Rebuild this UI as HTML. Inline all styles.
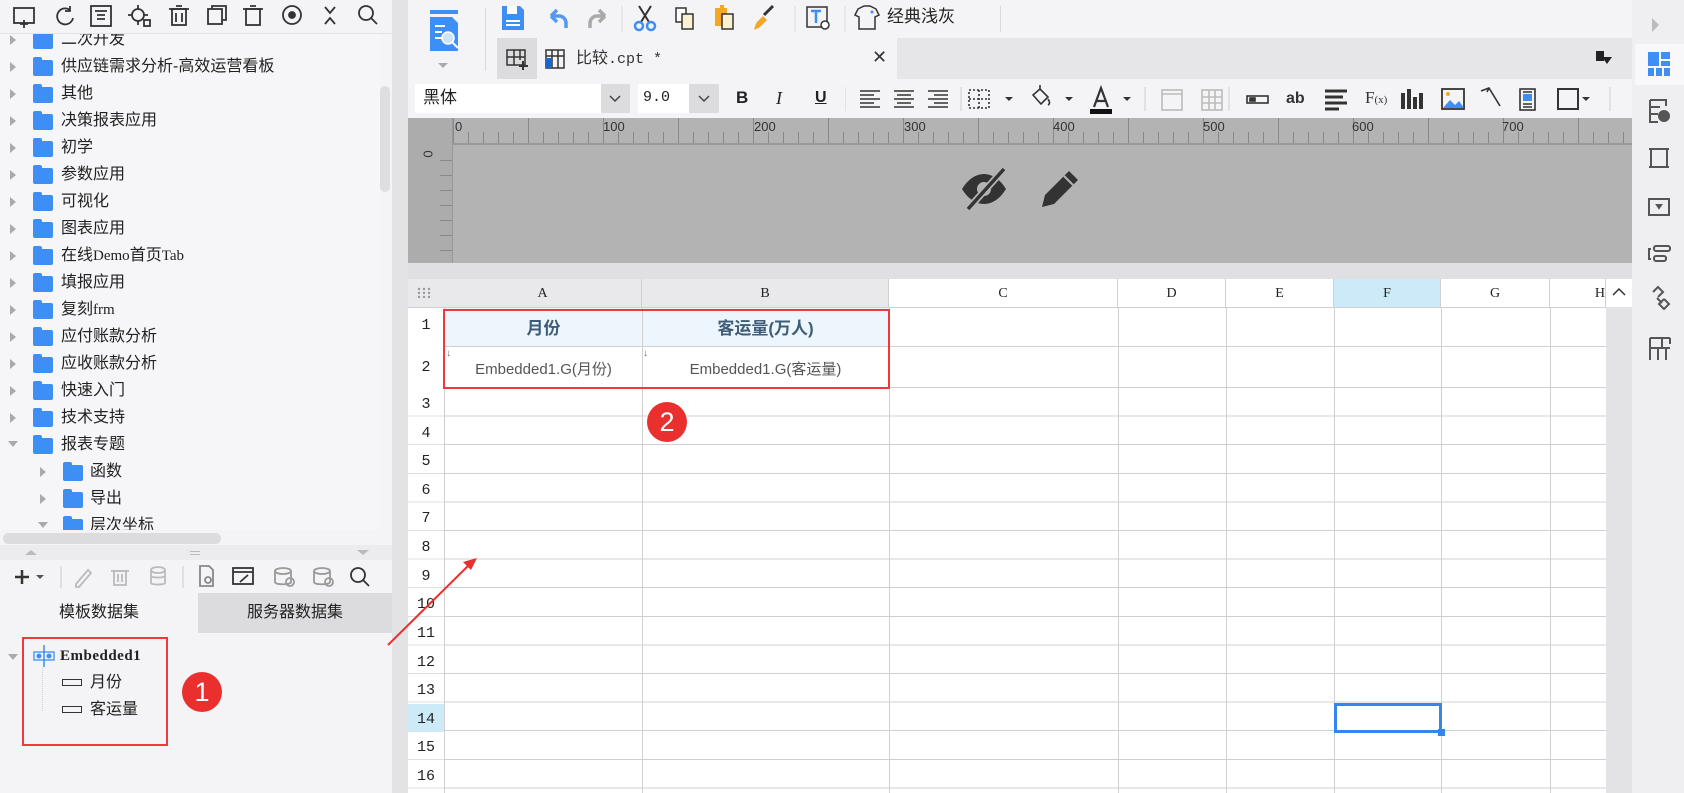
<!DOCTYPE html>
<html><head><meta charset="utf-8">
<style>
*{margin:0;padding:0;box-sizing:border-box}
body{width:1684px;height:793px;overflow:hidden;background:#f4f4f6;font-family:"Liberation Sans","Noto Sans CJK SC",sans-serif;position:relative;color:#222}
.a{position:absolute}
.ti{position:absolute;font-size:16px;line-height:20px;white-space:nowrap;color:#222}
.fold{position:absolute;width:20px;height:16px;background:#3d8ef5;border-radius:2px}
.fold:before{content:"";position:absolute;left:0;top:-3px;width:9px;height:4px;background:#3d8ef5;border-radius:2px 2px 0 0}
.tri{position:absolute;width:0;height:0;border-top:5px solid transparent;border-bottom:5px solid transparent;border-left:6px solid #aaa}
.trid{position:absolute;width:0;height:0;border-left:5px solid transparent;border-right:5px solid transparent;border-top:6px solid #aaa}
.rh{position:absolute;left:408px;width:36px;text-align:center;font-family:"Liberation Mono",monospace;font-size:15px;color:#222}
.ch{position:absolute;top:279px;height:29px;line-height:29px;text-align:center;font-family:"Liberation Serif",serif;font-size:14px;border-right:1px solid #d0d0d0}
.vl{position:absolute;top:308px;bottom:0;width:1px;background:#d0d0d0}
.ic{position:absolute}
.sep{position:absolute;width:1px;background:#d8d8d8}
</style></head><body>

<!-- LEFT PANEL -->
<div class="a" style="left:0;top:0;width:392px;height:34px;background:#f4f4f6;border-bottom:1px solid #e2e2e2"></div>
<svg class="a" style="left:0;top:0" width="392" height="34" fill="none" stroke="#333" stroke-width="1.8">
<rect x="14" y="8" width="20" height="15"/><path d="M24 20v8M20 24h8"/>
<path d="M70 10a8 8 0 1 0 3 8M70 6v5h-5"/>
<rect x="91" y="6" width="20" height="20"/><path d="M95 11h12M97 15h8M97 19h8"/>
<circle cx="138" cy="15" r="6"/><path d="M138 5v4M138 21v4M128 15h4M144 15h4"/><rect x="144" y="20" width="6" height="6"/>
<rect x="172" y="9" width="14" height="16"/><path d="M169 9h20M176 6h6M176 13v9M182 13v9"/>
<rect x="208" y="9" width="14" height="15"/><path d="M212 9V6h14v14h-4"/>
<rect x="246" y="9" width="14" height="16"/><path d="M243 9h20M250 6h6"/>
<circle cx="292" cy="15" r="9"/><circle cx="292" cy="15" r="3" fill="#333"/>
<path d="M325 7l5 6 5-6M325 24l5-6 5 6"/>
<circle cx="366" cy="13" r="7"/><path d="M371 18l6 6"/>
</svg>
<div class="a" style="left:0;top:34px;width:380px;height:496px;background:#f6f6f8;overflow:hidden">
<div class="tri" style="left:10px;top:1px"></div><div class="fold" style="left:33px;top:-1px"></div><div class="ti" style="left:61px;top:-4px">二次开发</div>
</div>
<div class="a" style="left:0;top:34px;width:380px;height:496px;overflow:hidden" id="tree">
<div class="tri" style="left:10px;top:28px"></div><div class="fold" style="left:33px;top:26px"></div><div class="ti" style="left:61px;top:23px">供应链需求分析-高效运营看板</div>
<div class="tri" style="left:10px;top:55px"></div><div class="fold" style="left:33px;top:53px"></div><div class="ti" style="left:61px;top:50px">其他</div>
<div class="tri" style="left:10px;top:82px"></div><div class="fold" style="left:33px;top:80px"></div><div class="ti" style="left:61px;top:77px">决策报表应用</div>
<div class="tri" style="left:10px;top:109px"></div><div class="fold" style="left:33px;top:107px"></div><div class="ti" style="left:61px;top:104px">初学</div>
<div class="tri" style="left:10px;top:136px"></div><div class="fold" style="left:33px;top:134px"></div><div class="ti" style="left:61px;top:131px">参数应用</div>
<div class="tri" style="left:10px;top:163px"></div><div class="fold" style="left:33px;top:161px"></div><div class="ti" style="left:61px;top:158px">可视化</div>
<div class="tri" style="left:10px;top:190px"></div><div class="fold" style="left:33px;top:188px"></div><div class="ti" style="left:61px;top:185px">图表应用</div>
<div class="tri" style="left:10px;top:217px"></div><div class="fold" style="left:33px;top:215px"></div><div class="ti" style="left:61px;top:212px">在线<span style="font-family:'Liberation Serif';font-size:15px">Demo</span>首页<span style="font-family:'Liberation Serif';font-size:15px">Tab</span></div>
<div class="tri" style="left:10px;top:244px"></div><div class="fold" style="left:33px;top:242px"></div><div class="ti" style="left:61px;top:239px">填报应用</div>
<div class="tri" style="left:10px;top:271px"></div><div class="fold" style="left:33px;top:269px"></div><div class="ti" style="left:61px;top:266px">复刻<span style="font-family:'Liberation Serif';font-size:15px">frm</span></div>
<div class="tri" style="left:10px;top:298px"></div><div class="fold" style="left:33px;top:296px"></div><div class="ti" style="left:61px;top:293px">应付账款分析</div>
<div class="tri" style="left:10px;top:325px"></div><div class="fold" style="left:33px;top:323px"></div><div class="ti" style="left:61px;top:320px">应收账款分析</div>
<div class="tri" style="left:10px;top:352px"></div><div class="fold" style="left:33px;top:350px"></div><div class="ti" style="left:61px;top:347px">快速入门</div>
<div class="tri" style="left:10px;top:379px"></div><div class="fold" style="left:33px;top:377px"></div><div class="ti" style="left:61px;top:374px">技术支持</div>
<div class="trid" style="left:8px;top:407px"></div><div class="fold" style="left:33px;top:404px"></div><div class="ti" style="left:61px;top:401px">报表专题</div>
<div class="tri" style="left:40px;top:433px"></div><div class="fold" style="left:63px;top:431px"></div><div class="ti" style="left:90px;top:428px">函数</div>
<div class="tri" style="left:40px;top:460px"></div><div class="fold" style="left:63px;top:458px"></div><div class="ti" style="left:90px;top:455px">导出</div>
<div class="trid" style="left:38px;top:488px"></div><div class="fold" style="left:63px;top:485px"></div><div class="ti" style="left:90px;top:482px">层次坐标</div>
</div>
<div class="a" style="left:380px;top:34px;width:12px;height:496px;background:#f4f4f6"></div>
<div class="a" style="left:380px;top:86px;width:10px;height:106px;background:#dedee0;border-radius:5px"></div>
<div class="a" style="left:0;top:530px;width:392px;height:15px;background:#f4f4f6"></div>
<div class="a" style="left:3px;top:533px;width:218px;height:11px;background:#dcdcde;border-radius:6px"></div>
<div class="a" style="left:0;top:545px;width:392px;height:15px;background:#ececee"></div>
<div class="a" style="left:25px;top:550px;border-left:6px solid transparent;border-right:6px solid transparent;border-bottom:5px solid #bbb"></div>
<div class="a" style="left:357px;top:550px;border-left:6px solid transparent;border-right:6px solid transparent;border-top:5px solid #bbb"></div>
<div class="a" style="left:190px;top:551px;width:10px;height:4px;border-top:1px solid #bbb;border-bottom:1px solid #bbb"></div>
<svg class="a" style="left:0;top:560px" width="392" height="33" fill="none" stroke="#333" stroke-width="1.8">
<path d="M15 17h14M22 10v14" stroke-width="2.5"/><path d="M36 15l4 4 4-4z" fill="#555" stroke="none"/>
<path d="M61 6v22" stroke="#ddd"/>
<path d="M76 24l12-14 3 3-12 14h-3z" stroke="#bbb"/>
<g stroke="#bbb"><rect x="114" y="11" width="12" height="14"/><path d="M111 11h18M118 14v8M122 14v8"/>
<ellipse cx="158" cy="10" rx="7" ry="3"/><path d="M151 10v13c0 2 14 2 14 0V10M151 16c0 2 14 2 14 0"/></g>
<path d="M183 6v22" stroke="#ddd"/>
<path d="M200 6h9l4 4v16h-13z" stroke="#888"/><circle cx="208" cy="20" r="3" stroke="#888"/>
<rect x="233" y="8" width="20" height="16"/><path d="M233 12h20M240 22l8-7"/>
<g stroke="#999"><ellipse cx="283" cy="11" rx="8" ry="3"/><path d="M275 11v11c0 3 16 3 16 0V11"/><circle cx="290" cy="22" r="4"/>
<ellipse cx="322" cy="11" rx="8" ry="3"/><path d="M314 11v11c0 3 16 3 16 0V11"/><circle cx="329" cy="22" r="4"/></g>
<circle cx="358" cy="15" r="7"/><path d="M363 20l6 6"/>
</svg>
<div class="a" style="left:0;top:593px;width:198px;height:40px;background:#f4f4f6;font-size:16px;line-height:40px;text-align:center">模板数据集</div>
<div class="a" style="left:198px;top:593px;width:194px;height:40px;background:#dcdcdf;font-size:16px;line-height:40px;text-align:center">服务器数据集</div>
<div class="a" style="left:0;top:633px;width:392px;height:160px;background:#f4f4f6"></div>
<div class="trid" style="left:8px;top:654px"></div>
<svg class="a" style="left:33px;top:645px" width="22" height="22"><path d="M11 0v22" stroke="#3d8ef5" stroke-width="1.5"/><rect x="1" y="7" width="20" height="8" fill="none" stroke="#3d8ef5" stroke-width="1.3"/><circle cx="6" cy="11" r="2.5" fill="#3d8ef5"/><circle cx="16" cy="11" r="2.5" fill="#3d8ef5"/></svg>
<div class="ti" style="left:60px;top:646px;font-family:'Liberation Serif',serif;font-size:15px;font-weight:bold;letter-spacing:0.5px">Embedded1</div>
<div class="a" style="left:42px;top:668px;width:1px;height:43px;border-left:1px dotted #ccc"></div>
<div class="a" style="left:62px;top:679px;width:20px;height:7px;border:1.5px solid #333"></div>
<div class="ti" style="left:90px;top:673px">月份</div>
<div class="a" style="left:62px;top:706px;width:20px;height:7px;border:1.5px solid #333"></div>
<div class="ti" style="left:90px;top:700px">客运量</div>
<div class="a" style="left:22px;top:637px;width:146px;height:109px;border:2px solid #f0383f"></div>
<div class="a" style="left:182px;top:672px;width:40px;height:40px;border-radius:50%;background:#ea2f2f;color:#fff;font-size:27px;line-height:40px;text-align:center">1</div>

<div class="a" style="left:392px;top:0;width:16px;height:793px;background:#e3e3e6"></div>

<!-- MAIN TOOLBAR -->
<div class="a" style="left:408px;top:0;width:1224px;height:38px;background:#f4f4f6"></div>
<svg class="a" style="left:428px;top:8px" width="36" height="68">
<rect x="2" y="2" width="28" height="4" fill="#3d8ef5"/><path d="M2 9h22l6 6v28H2z" fill="#3d8ef5"/>
<path d="M7 18h10M7 24h7M7 30h7" stroke="#fff" stroke-width="2"/><circle cx="20" cy="30" r="6" fill="#cfe3fb" stroke="#fff" stroke-width="1.5"/><path d="M24 34l6 6" stroke="#fff" stroke-width="2"/>
<path d="M10 55l5 5 5-5z" fill="#aaa"/></svg>
<div class="sep" style="left:485px;top:8px;height:63px"></div>
<svg class="a" style="left:495px;top:0" width="420" height="38">
<path d="M7 6h18l4 4v20H7z" fill="#3d8ef5"/><rect x="12" y="6" width="10" height="8" fill="#fff"/><rect x="11" y="20" width="14" height="2" fill="#fff"/><rect x="11" y="24" width="14" height="2" fill="#fff"/>
<path d="M56 16h8a7 7 0 0 1 7 7v5M56 16l6-6M56 16l6 6" fill="none" stroke="#5599ee" stroke-width="3.5" stroke-linejoin="round"/>
<path d="M110 16h-8a7 7 0 0 0-7 7v5M110 16l-6-6M110 16l-6 6" fill="none" stroke="#aaa" stroke-width="3.5" stroke-linejoin="round"/>
<path d="M127 6v26" stroke="#ddd"/>
<path d="M144 6l10 16M156 6l-10 16" stroke="#333" stroke-width="2"/><circle cx="144" cy="26" r="4" fill="none" stroke="#3d8ef5" stroke-width="2.5"/><circle cx="156" cy="26" r="4" fill="none" stroke="#3d8ef5" stroke-width="2.5"/>
<rect x="181" y="8" width="10" height="14" fill="#fff" stroke="#333" stroke-width="1.5"/><rect x="187" y="14" width="11" height="15" fill="#fbf0d0" stroke="#333" stroke-width="1.5"/>
<rect x="220" y="8" width="12" height="18" fill="#f5a623"/><rect x="225" y="5" width="4" height="4" fill="#f5a623"/><rect x="227" y="14" width="11" height="15" fill="#fbf0d0" stroke="#333" stroke-width="1.5"/>
<path d="M262 22l6-6 4 4-6 6c-3 3-6 3-7 4 1-3 1-5 3-8z" fill="#f5a623"/><path d="M269 15l9-9" stroke="#333" stroke-width="3"/>
<path d="M300 6v26" stroke="#ddd"/>
<rect x="312" y="7" width="20" height="20" fill="none" stroke="#333" stroke-width="1.5"/><path d="M316 11h10M321 11v12" stroke="#3d8ef5" stroke-width="2.5"/><circle cx="330" cy="25" r="4" fill="#fff" stroke="#333" stroke-width="1.5"/>
<path d="M350 6v26" stroke="#ddd"/>
<path d="M363 9l6-3h6l6 3 3 6-4 2v12h-16V17l-4-2z" fill="none" stroke="#333" stroke-width="1.5"/><circle cx="377" cy="12" r="1.5" fill="#3d8ef5"/>
</svg>
<div class="ti" style="left:887px;top:7px;font-size:17px">经典浅灰</div>
<div class="sep" style="left:1000px;top:6px;height:26px"></div>

<!-- TAB ROW -->
<div class="a" style="left:497px;top:38px;width:1135px;height:41px;background:#e6e6e9"></div>
<div class="a" style="left:497px;top:38px;width:40px;height:41px;background:#dcdcdf"></div>
<svg class="a" style="left:505px;top:47px" width="24" height="24" fill="none" stroke="#333" stroke-width="1.5"><rect x="2" y="3" width="18" height="15"/><path d="M2 10h18M9 3v15M15 3v10"/><path d="M18 14v9M14 19h9" stroke-width="2"/></svg>
<div class="a" style="left:537px;top:38px;width:360px;height:41px;background:#f4f4f6"></div>
<svg class="a" style="left:544px;top:48px" width="22" height="22"><rect x="2" y="2" width="18" height="18" fill="none" stroke="#333" stroke-width="1.5"/><path d="M2 8h18M8 2v18M14 2v18" stroke="#333" stroke-width="1.5"/><rect x="2" y="10" width="6" height="10" fill="#1a66c9"/></svg>
<div class="ti" style="left:576px;top:49px;font-size:16px;color:#333">比较<span style="font-family:'Liberation Mono',monospace;font-size:15px">.cpt *</span></div>
<div class="ti" style="left:872px;top:47px;font-size:18px;color:#333">✕</div>
<svg class="a" style="left:1595px;top:50px" width="18" height="16"><rect x="1" y="1" width="8" height="10" fill="#222"/><path d="M7 7h10l-5 7z" fill="#222"/></svg>

<!-- FONT ROW -->
<div class="a" style="left:408px;top:79px;width:1224px;height:39px;background:#f4f4f6"></div>
<div class="a" style="left:415px;top:84px;width:186px;height:29px;background:#fff"></div>
<div class="ti" style="left:423px;top:88px;font-size:17px">黑体</div>
<div class="a" style="left:601px;top:84px;width:29px;height:29px;background:#dcdcdf"></div>
<svg class="a" style="left:601px;top:84px" width="29" height="29"><path d="M9 12l5 5 5-5" fill="none" stroke="#444" stroke-width="1.5"/></svg>
<div class="a" style="left:638px;top:84px;width:51px;height:29px;background:#fff"></div>
<div class="ti" style="left:643px;top:88px;font-family:'Liberation Mono',monospace;font-size:15px">9.0</div>
<div class="a" style="left:689px;top:84px;width:30px;height:29px;background:#dcdcdf"></div>
<svg class="a" style="left:689px;top:84px" width="30" height="29"><path d="M10 12l5 5 5-5" fill="none" stroke="#444" stroke-width="1.5"/></svg>
<div class="ti" style="left:736px;top:88px;font-weight:bold;font-size:17px">B</div>
<div class="ti" style="left:776px;top:88px;font-style:italic;font-family:'Liberation Serif';font-size:18px">I</div>
<div class="ti" style="left:815px;top:88px;font-weight:bold;font-size:16px;text-decoration:underline">U</div>
<svg class="a" style="left:845px;top:79px" width="790" height="39" stroke="#333" fill="none" stroke-width="1.6">
<path d="M0 8v24" stroke="#ddd"/>
<path d="M15 12h20M15 16h14M15 20h20M15 24h14M15 28h20"/>
<path d="M49 12h20M52 16h14M49 20h20M52 24h14M49 28h20"/>
<path d="M83 12h20M89 16h14M83 20h20M89 24h14M83 28h20"/>
<path d="M116 8v24" stroke="#ddd"/>
<rect x="124" y="11" width="20" height="18" stroke-dasharray="2 2"/><path d="M134 11v18M124 20h20" stroke-dasharray="2 2"/>
<path d="M160 18l4 4 4-4z" fill="#333" stroke="none"/>
<path d="M188 16l7-6 8 8-7 7z"/><path d="M195 10v-4M203 20c2 3 2 5 0 6"/>
<path d="M220 18l4 4 4-4z" fill="#333" stroke="none"/>
<path d="M249 28l7-19 7 19M252 22h8" stroke-width="2.2"/><rect x="245" y="30" width="22" height="5" fill="#111" stroke="none"/>
<path d="M278 18l4 4 4-4z" fill="#333" stroke="none"/>
<path d="M300 8v24" stroke="#ddd"/>
<g stroke="#bbb"><rect x="317" y="11" width="20" height="20"/><path d="M317 15h20"/>
<rect x="357" y="11" width="20" height="20"/><path d="M357 18h20M357 24h20M364 11v20M370 11v20"/></g>
<path d="M384 8v24" stroke="#ddd"/>
<rect x="402" y="17" width="21" height="7"/><rect x="405" y="19" width="5" height="3" fill="#333"/>
<path d="M480 12h22M480 18h18M480 24h22M480 30h14" stroke-width="3"/>
<path d="M558 14v16M564 10v20M570 18v12M576 14v16" stroke-width="4"/>
<rect x="597" y="10" width="22" height="20" stroke-width="1.8"/><path d="M598 29l7-8 5 5 4-4 5 7z" fill="#3d8ef5" stroke="none"/><circle cx="603" cy="15" r="2" fill="#f5a623" stroke="none"/>
<path d="M636 12l8-3 11 18M644 9l-2 4"/>
<rect x="675" y="10" width="15" height="21"/><rect x="678" y="15" width="9" height="7" fill="#3d8ef5" stroke="none"/><path d="M678 13h9M678 25h9M678 28h9"/>
<rect x="713" y="10" width="20" height="20" stroke-width="2"/><path d="M737 18l4 4 4-4z" fill="#333" stroke="none"/>
<path d="M765 8v24" stroke="#ddd"/>
</svg>
<div class="ti" style="left:1286px;top:89px;font-weight:bold;font-size:16px;color:#333">ab</div>
<div class="ti" style="left:1365px;top:88px;font-family:'Liberation Serif';font-size:17px;color:#333">F<span style="font-size:11px">(x)</span></div>

<!-- RULER -->
<div class="a" style="left:408px;top:118px;width:1224px;height:145px;background:#b3b3b3"></div>
<div class="a" style="left:408px;top:118px;width:45px;height:145px;background:#acacac"></div>
<div class="a" style="left:453px;top:143px;width:1179px;height:2px;background:#999"></div>
<div class="a" style="left:452px;top:118px;width:1px;height:145px;background:#999"></div>
<div class="a" style="left:453px;top:132px;width:1179px;height:11px;background:repeating-linear-gradient(90deg,#888 0 1px,transparent 1px 15px)"></div>
<div class="a" style="left:453px;top:118px;width:1179px;height:25px;background:repeating-linear-gradient(90deg,#888 0 1px,transparent 1px 75px)"></div>
<div class="a" style="left:440px;top:160px;width:12px;height:100px;background:repeating-linear-gradient(180deg,#888 0 1px,transparent 1px 15px)"></div>
<div class="ti" style="left:455px;top:117px;font-size:13px;color:#333">0</div>
<div class="ti" style="left:603px;top:117px;font-size:13px;color:#333">100</div>
<div class="ti" style="left:754px;top:117px;font-size:13px;color:#333">200</div>
<div class="ti" style="left:904px;top:117px;font-size:13px;color:#333">300</div>
<div class="ti" style="left:1053px;top:117px;font-size:13px;color:#333">400</div>
<div class="ti" style="left:1203px;top:117px;font-size:13px;color:#333">500</div>
<div class="ti" style="left:1352px;top:117px;font-size:13px;color:#333">600</div>
<div class="ti" style="left:1502px;top:117px;font-size:13px;color:#333">700</div>
<div class="ti" style="left:424px;top:144px;font-size:13px;color:#333;transform:rotate(90deg)">0</div>
<svg class="a" style="left:958px;top:165px" width="56" height="50"><path d="M4 24c6-10 14-15 22-15s16 5 22 15c-6 10-14 15-22 15S10 34 4 24z" fill="#333"/><circle cx="26" cy="24" r="7" fill="#b3b3b3"/><path d="M10 44L46 4" stroke="#b3b3b3" stroke-width="7"/><path d="M10 44L46 4" stroke="#333" stroke-width="3.5"/></svg>
<svg class="a" style="left:1034px;top:165px" width="50" height="50"><path d="M8 42l3-12 24-24 9 9-24 24z" fill="#333"/><path d="M30 11l9 9" stroke="#b3b3b3" stroke-width="2"/></svg>
<div class="a" style="left:408px;top:263px;width:1224px;height:16px;background:#e0e0e3"></div>

<!-- GRID -->
<div class="a" style="left:408px;top:279px;width:1198px;height:514px;background:#fff"></div>
<div class="a" style="left:444px;top:388px;width:1162px;height:405px;background:repeating-linear-gradient(180deg,#fff 0 27.6px,#d0d0d0 27.6px 28.6px)"></div>
<div class="a" style="left:408px;top:388px;width:36px;height:405px;background:repeating-linear-gradient(180deg,#fff 0 27.6px,#e0e0e0 27.6px 28.6px)"></div>
<div class="a" style="left:408px;top:704px;width:36px;height:28px;background:#cdeaf8"></div>
<div class="a" style="left:445px;top:308px;width:444px;height:39px;background:#eef6fd"></div>
<div class="a" style="left:444px;top:346px;width:1162px;height:1px;background:#d0d0d0"></div>
<div class="a" style="left:444px;top:387px;width:1162px;height:1px;background:#d0d0d0"></div>
<div class="a" style="left:408px;top:279px;width:36px;height:29px;background:#e9e9ec"></div>
<svg class="a" style="left:416px;top:286px" width="16" height="14" fill="#999"><circle cx="3" cy="3" r="1.2"/><circle cx="8" cy="3" r="1.2"/><circle cx="13" cy="3" r="1.2"/><circle cx="3" cy="7" r="1.2"/><circle cx="8" cy="7" r="1.2"/><circle cx="13" cy="7" r="1.2"/><circle cx="3" cy="11" r="1.2"/><circle cx="8" cy="11" r="1.2"/><circle cx="13" cy="11" r="1.2"/></svg>
<div class="ch" style="left:444px;width:198px;background:#e9e9ec">A</div>
<div class="ch" style="left:642px;width:247px;background:#e9e9ec">B</div>
<div class="ch" style="left:889px;width:229px;background:#fff">C</div>
<div class="ch" style="left:1118px;width:108px;background:#fff">D</div>
<div class="ch" style="left:1226px;width:108px;background:#fff">E</div>
<div class="ch" style="left:1334px;width:107px;background:#cdeaf8">F</div>
<div class="ch" style="left:1441px;width:109px;background:#fff">G</div>
<div class="ch" style="left:1550px;width:56px;background:#fff;text-align:right;padding-right:0">H</div>
<div class="a" style="left:408px;top:307px;width:1198px;height:1px;background:#d0d0d0"></div>
<div class="vl" style="left:444px"></div>
<div class="vl" style="left:642px"></div>
<div class="vl" style="left:889px"></div>
<div class="vl" style="left:1118px"></div>
<div class="vl" style="left:1226px"></div>
<div class="vl" style="left:1334px"></div>
<div class="vl" style="left:1441px"></div>
<div class="vl" style="left:1550px"></div>

<div class="rh" style="top:317px">1</div>
<div class="rh" style="top:359px">2</div>
<div class="rh" style="top:396px">3</div>
<div class="rh" style="top:425px">4</div>
<div class="rh" style="top:453px">5</div>
<div class="rh" style="top:482px">6</div>
<div class="rh" style="top:510px">7</div>
<div class="rh" style="top:539px">8</div>
<div class="rh" style="top:568px">9</div>
<div class="rh" style="top:596px">10</div>
<div class="rh" style="top:625px">11</div>
<div class="rh" style="top:654px">12</div>
<div class="rh" style="top:682px">13</div>
<div class="rh" style="top:711px">14</div>
<div class="rh" style="top:739px">15</div>
<div class="rh" style="top:768px">16</div>

<div class="ti" style="left:445px;width:197px;top:319px;text-align:center;font-weight:bold;font-size:17px;color:#3e5d78">月份</div>
<div class="ti" style="left:642px;width:247px;top:319px;text-align:center;font-weight:bold;font-size:17px;color:#3e5d78">客运量(万人)</div>
<div class="ti" style="left:445px;width:197px;top:360px;text-align:center;font-size:15px;color:#555">Embedded1.G(月份)</div>
<div class="ti" style="left:642px;width:247px;top:360px;text-align:center;font-size:15px;color:#555">Embedded1.G(客运量)</div>
<div class="ti" style="left:446px;top:344px;font-size:10px;color:#666">↓</div>
<div class="ti" style="left:643px;top:344px;font-size:10px;color:#666">↓</div>
<div class="a" style="left:443px;top:309px;width:447px;height:80px;border:2px solid #f0383f"></div>
<div class="a" style="left:647px;top:402px;width:40px;height:40px;border-radius:50%;background:#ea2f2f;color:#fff;font-size:27px;line-height:40px;text-align:center">2</div>
<div class="a" style="left:1334px;top:703px;width:108px;height:30px;border:3px solid #3584f0"></div>
<div class="a" style="left:1438px;top:729px;width:7px;height:7px;background:#3584f0"></div>

<svg class="a" style="left:380px;top:550px" width="110" height="105"><path d="M8 95L92 12" stroke="#ea2f2f" stroke-width="2"/><path d="M97 8l-14 4 8 8z" fill="#ea2f2f"/></svg>

<!-- vertical scrollbar of grid -->
<div class="a" style="left:1606px;top:279px;width:26px;height:514px;background:#e3e3e6"></div>
<div class="a" style="left:1606px;top:279px;width:26px;height:28px;background:#fff"></div>
<svg class="a" style="left:1610px;top:285px" width="18" height="14"><path d="M3 10l6-6 6 6" fill="none" stroke="#333" stroke-width="1.5"/></svg>

<!-- RIGHT PANEL -->
<div class="a" style="left:1632px;top:0;width:52px;height:793px;background:#efeff2"></div>
<div class="a" style="left:1652px;top:18px;border-top:7px solid transparent;border-bottom:7px solid transparent;border-left:7px solid #bbb"></div>
<div class="a" style="left:1635px;top:44px;width:49px;height:41px;background:#f8f8fa"></div>
<svg class="a" style="left:1632px;top:44px" width="52" height="330" fill="none" stroke="#555" stroke-width="2">
<g fill="#3d8ef5" stroke="none"><rect x="16" y="8" width="11" height="14"/><rect x="29" y="8" width="9" height="7"/><rect x="29" y="17" width="9" height="5"/><rect x="16" y="24" width="6" height="8"/><rect x="24" y="24" width="6" height="8"/><rect x="32" y="24" width="6" height="8"/></g>
<path d="M18 56h16v6M18 56v22h8M18 63h10M18 70h8"/><circle cx="32" cy="72" r="5" fill="#555"/>
<rect x="19" y="105" width="16" height="18"/><path d="M17 105h2M35 105h2M17 123h2M35 123h2"/>
<rect x="17" y="155" width="20" height="16"/><path d="M25 161l2 3 2-3z" fill="#555"/>
<path d="M19 205h-2v10h2"/><rect x="22" y="202" width="16" height="5" rx="2"/><rect x="22" y="212" width="12" height="5" rx="2"/>
<path d="M21 248l5-5 5 5-5 5M32 255l-5 5 5 5 5-5-5-5M25 254l5 5"/>
<path d="M18 294h20M18 294v22M18 304h20M26 304v12M34 304v12M30 294v10M38 294v6"/>
</svg>

</body></html>
